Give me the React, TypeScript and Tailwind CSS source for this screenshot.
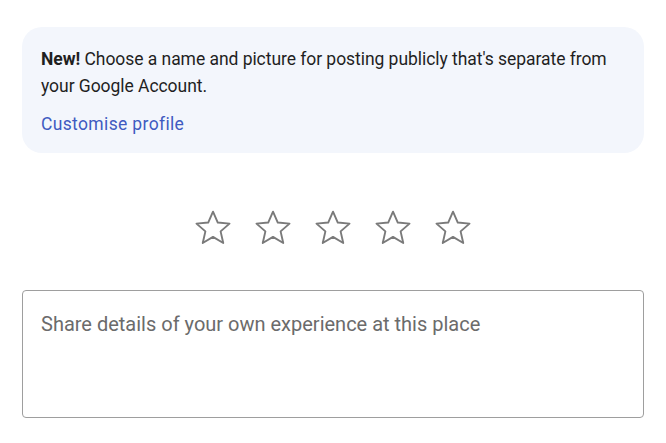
import { useState } from 'react';

// Outline star drawn as a single stroked polygon
function StarOutline() {
  return (
    <svg width="40" height="38" viewBox="0 0 24 23" fill="none" className="text-[#7a7a7a]">
      <path
        d="M12 1.6l2.9 6.6 7.1.65-5.4 4.7 1.6 7.05L12 16.9l-6.2 3.7 1.6-7.05L2 8.85l7.1-.65L12 1.6z"
        stroke="currentColor"
        strokeWidth="1.15"
        strokeLinejoin="round"
      />
    </svg>
  );
}

export default function App() {
  const [text, setText] = useState('');

  return (
    <div className="w-[666px] h-[443px] bg-white px-[22px] pt-[27px] font-['Roboto',sans-serif]">
      {/* Profile notice */}
      <div className="rounded-[20px] bg-[#f3f6fc] pl-[19px] pr-[16px] pt-[19px] pb-[19px]">
        <p className="text-[17.5px] leading-[27px] text-[#1f1f1f] tracking-[-0.05px]">
          <span className="font-bold">New!</span> Choose a name and picture for posting publicly that's separate from your Google Account.
        </p>
        <a href="#" className="mt-[14px] block text-[17.5px] leading-[20px] text-[#3f5bc1] tracking-[0.35px]">
          Customise profile
        </a>
      </div>

      {/* Rating */}
      <div className="mt-[56px] flex justify-center gap-[20px]">
        {[1, 2, 3, 4, 5].map(n => (
          <button key={n} type="button" aria-label={`${n} star`}>
            <StarOutline />
          </button>
        ))}
      </div>

      {/* Review text */}
      <textarea
        value={text}
        onChange={e => setText(e.target.value)}
        placeholder="Share details of your own experience at this place"
        className="mt-[43px] block h-[128px] w-full resize-none rounded-[4px] border border-[#9e9e9e] px-[18px] pt-[19px] text-[20px] leading-[28px] text-[#202124] placeholder-[#6b6b6b] focus:outline-none"
      />
    </div>
  );
}
